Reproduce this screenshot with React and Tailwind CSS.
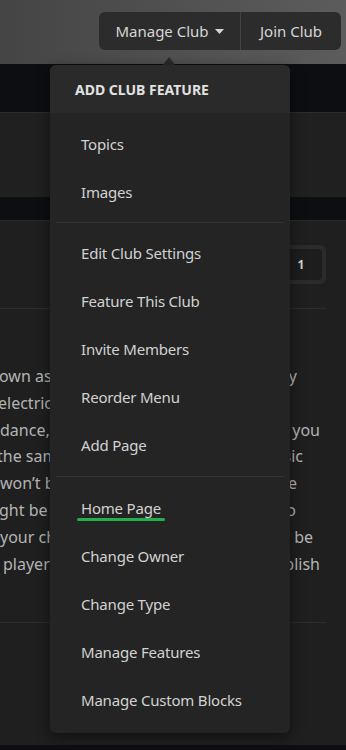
import React from 'react';

const font = { fontFamily: '"Noto Sans", "Open Sans", sans-serif' };

const lines = [
  { left: 'own as A', right: 'known by', ml: '-ml-[1px]', pr: 'pr-[23px]' },
  { left: 'electricity', right: 'music,', ml: '-ml-[2px]', pr: 'pr-[29px]' },
  { left: 'dance, and', right: 'if you', ml: 'ml-0', pr: 'pr-0' },
  { left: 'the same', right: 'music', ml: '-ml-[3px]', pr: 'pr-[17px]' },
  { left: 'won\u2019t be', right: 'the', ml: 'ml-0', pr: 'pr-[23px]' },
  { left: 'ght be made', right: 'to', ml: '-ml-[1px]', pr: 'pr-[24px]' },
  { left: 'your chance', right: 'can be', ml: 'ml-0', pr: 'pr-[7px]' },
  { left: ' players', right: 'publish', ml: 'ml-[3px]', pr: 'pr-0' },
];

const groupA = ['Topics', 'Images'];
const groupB = ['Edit Club Settings', 'Feature This Club', 'Invite Members', 'Reorder Menu', 'Add Page'];
const groupC = ['Home Page', 'Change Owner', 'Change Type', 'Manage Features', 'Manage Custom Blocks'];

const MenuItem = ({ label, active }) => (
  <div className="h-[48px] flex items-center pl-[31px] text-[15px] tracking-[-0.2px] text-[#d2d2d2]">
    {active ? (
      <span className="relative leading-[20px]">
        {label}
        <span className="absolute -left-[4px] -right-[4px] -bottom-[3px] h-[3px] rounded-full bg-[#22b04b]"></span>
      </span>
    ) : (
      <span className="leading-[20px]">{label}</span>
    )}
  </div>
);

const Divider = () => <div className="mx-[6px] my-[6px] h-px bg-[#333333]"></div>;

export default function App() {
  return (
    <div className="relative w-full h-[750px] overflow-hidden bg-[#0d0e12]" style={font}>
      {/* top bar */}
      <div className="h-[64px] bg-gradient-to-r from-[#454545] to-[#5c5c5c] flex justify-end items-start pt-[12px] pr-[5px]">
        <div className="flex h-[38px] rounded-[6px] bg-[#2c2c2c] text-[15px] text-[#d6d6d6]">
          <button className="w-[141px] flex items-center justify-center gap-[6px]">
            Manage Club
            <svg width="9" height="5" viewBox="0 0 9 5"><path d="M0 0h9L4.5 5z" fill="#d6d6d6" /></svg>
          </button>
          <div className="w-px bg-[#424242]"></div>
          <button className="w-[100px] flex items-center justify-center">Join Club</button>
        </div>
      </div>

      {/* page */}
      <div className="pt-[48px]">
        <div className="h-[85px] bg-[#202020] border-t border-[#2c2c2c]"></div>
        <div className="mt-[23px] h-[525px] bg-[#1f1f1f] border-t border-[#2a2a2a] pr-[20px]">
          <div className="flex justify-end pt-[24px]">
            <div className="w-[50px] h-[39px] rounded-[6px] bg-[#2b2b2b] p-[4px]">
              <div className="w-full h-full rounded-[4px] bg-[#1d1d1d] flex items-center justify-center text-[12px] font-bold text-[#cfcfcf]">1</div>
            </div>
          </div>
          <div className="mt-[24px] h-px bg-[#2c2c2c]"></div>
          <div className="pt-[54px] text-[16px] leading-[26.8px] text-[#b4b4b4] pr-[6px]">
            {lines.map((l, i) => (
              <div key={i} className="flex justify-between whitespace-nowrap">
                <span className={l.ml}>{l.left}</span>
                <span className={l.pr}>{l.right}</span>
              </div>
            ))}
          </div>
          <div className="mt-[45px] h-px bg-[#2c2c2c]"></div>
        </div>
      </div>

      {/* dropdown arrow */}
      <svg className="absolute left-[162px] top-[57px]" width="14" height="9" viewBox="0 0 14 9">
        <path d="M0 9L7 0l7 9z" fill="#2a2a2a" />
      </svg>

      {/* dropdown menu */}
      <div className="absolute left-[50px] top-[65px] w-[240px] rounded-[6px] overflow-hidden bg-[#242424] shadow-[0_4px_14px_rgba(0,0,0,0.5)]">
        <div className="h-[48px] bg-[#2a2a2a] flex items-center pl-[25px] pt-[1px] text-[14px] font-bold text-[#e2e2e2]">
          ADD CLUB FEATURE
        </div>
        <div className="pt-[7px] pb-[9px]">
          {groupA.map((t) => <MenuItem key={t} label={t} />)}
          <Divider />
          {groupB.map((t) => <MenuItem key={t} label={t} />)}
          <div className="mx-[6px] mt-[7px] mb-[7px] h-px bg-[#333333]"></div>
          {groupC.map((t) => <MenuItem key={t} label={t} active={t === 'Home Page'} />)}
        </div>
      </div>
    </div>
  );
}
